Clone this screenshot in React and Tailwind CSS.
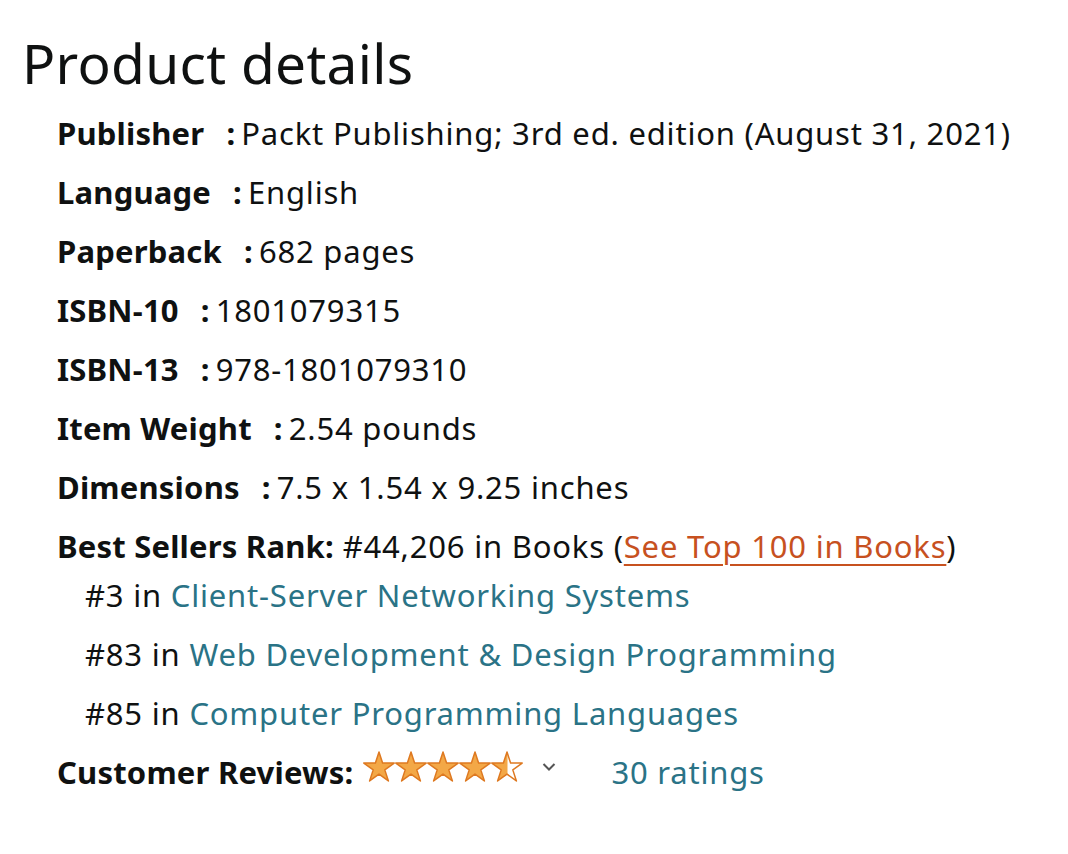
const details = [
  ['Publisher', 'Packt Publishing; 3rd ed. edition (August 31, 2021)'],
  ['Language', 'English'],
  ['Paperback', '682 pages'],
  ['ISBN-10', '1801079315'],
  ['ISBN-13', '978-1801079310'],
  ['Item Weight', '2.54 pounds'],
  ['Dimensions', '7.5 x 1.54 x 9.25 inches'],
];

const ranks = [
  ['#3', 'Client-Server Networking Systems'],
  ['#83', 'Web Development & Design Programming'],
  ['#85', 'Computer Programming Languages'],
];

const STAR = '16,1 19.59,12.06 31.2,12.06 21.81,18.89 25.4,29.94 16,23.11 6.6,29.94 10.19,18.89 0.8,12.06 12.41,12.06';

function Star({ half }) {
  return (
    <svg width="32" height="31" viewBox="0 0 32 31">
      <defs>
        <clipPath id="halfclip">
          <rect x="0" y="0" width="16.5" height="31" />
        </clipPath>
      </defs>
      {half ? (
        <>
          <polygon points={STAR} fill="#fff" />
          <polygon points={STAR} fill="#F3A847" clipPath="url(#halfclip)" />
        </>
      ) : (
        <polygon points={STAR} fill="#F3A847" />
      )}
      <polygon points={STAR} fill="none" stroke="#DE7921" strokeWidth="1.5" strokeLinejoin="round" />
    </svg>
  );
}

export default function App() {
  return (
    <div className="bg-white min-h-[854px] px-[22px] pt-[27px] text-[#0F1111] font-['Noto_Sans',sans-serif]">
      <h2 className="text-[55px] leading-[72px] tracking-[0.3px]">Product details</h2>
      <ul className="pl-[35px] mt-[14px] text-[31px] leading-[40px] tracking-[0.8px]">
        {details.map(([k, v]) => (
          <li key={k} className="mb-[19px]">
            <span className="font-bold tracking-[0.2px]">
              {k}
              <span className="ml-[22px] mr-[6px]">:</span>
            </span>
            <span>{v}</span>
          </li>
        ))}
        <li className="mb-[19px]">
          <span className="font-bold tracking-[0.2px]">Best Sellers Rank:</span> #44,206 in Books (
          <a href="#" className="text-[#C7511F] underline decoration-2 underline-offset-[6px]">See Top 100 in Books</a>)
          <ul className="pl-[28px] mt-[9px]">
            {ranks.map(([n, cat]) => (
              <li key={n} className="mb-[19px] last:mb-0">
                {n} in <a href="#" className="text-[#2a7386]">{cat}</a>
              </li>
            ))}
          </ul>
        </li>
        <li className="flex items-start">
          <span className="font-bold tracking-[0.2px]">Customer Reviews:</span>
          <span className="ml-[10px] -mt-[1px] flex">
            <Star /><Star /><Star /><Star /><Star half />
          </span>
          <svg className="ml-[19px] mt-[10px]" width="14" height="10" viewBox="0 0 14 10">
            <path d="M1.5 2 L7 7.5 L12.5 2" fill="none" stroke="#555" strokeWidth="2" />
          </svg>
          <a href="#" className="ml-[55px] text-[#2a7386]">30 ratings</a>
        </li>
      </ul>
    </div>
  );
}
